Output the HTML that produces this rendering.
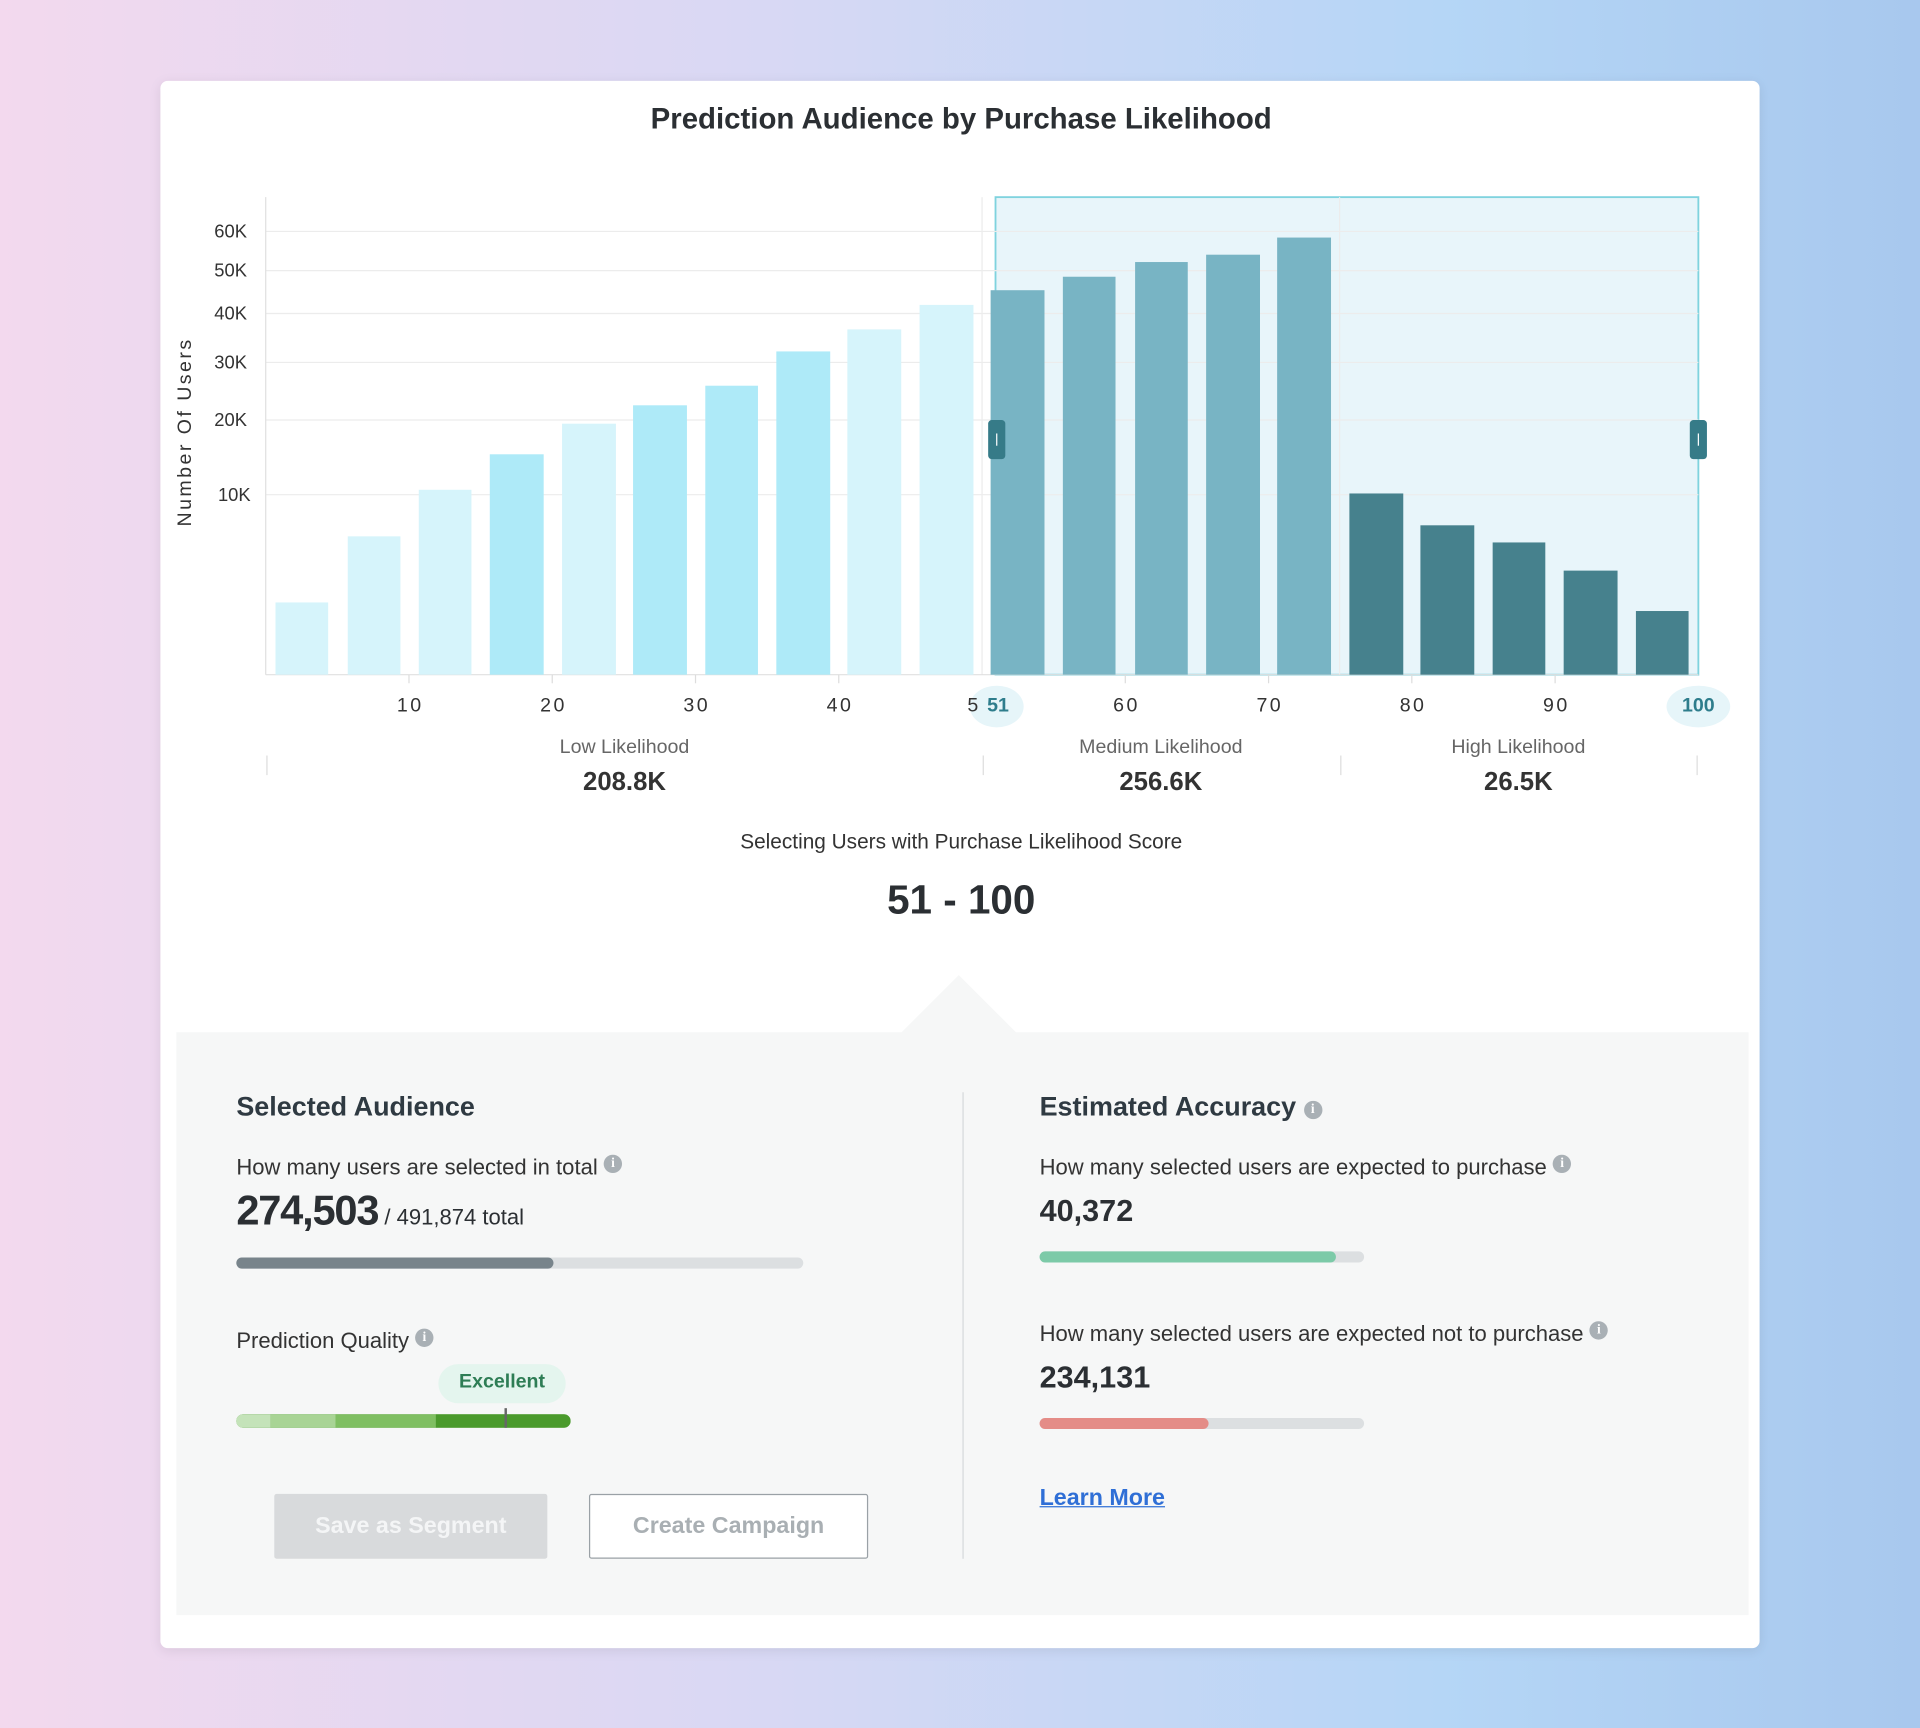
<!DOCTYPE html>
<html><head><meta charset="utf-8"><style>
html,body{margin:0;padding:0;width:1920px;height:1728px;overflow:hidden;background:linear-gradient(90deg,#f3d9ee 0%,#d8d8f4 40%,#b5d6f6 75%,#a8c8ee 100%);font-family:"Liberation Sans",sans-serif;}
#w{position:absolute;left:0;top:0;width:1568px;height:1411px;transform:scale(1.22449);transform-origin:0 0;}
.a{position:absolute;}
.card{left:131px;top:66px;width:1306px;height:1280px;background:#fff;border-radius:6px;box-shadow:0 2px 10px rgba(0,0,0,.08);}
.t{color:#333;white-space:nowrap;}
.c{transform:translateX(-50%);text-align:center;}
.info{display:inline-block;width:15px;height:15px;border-radius:50%;background:#a9b0b5;color:#fff;font-size:11px;font-weight:bold;text-align:center;line-height:15px;vertical-align:top;font-family:"Liberation Serif",serif;}
</style></head><body><div id="w">
<div class="a card"></div>
<div class="a t c" style="left:785px;top:84px;font-size:24px;font-weight:bold;color:#2b2f33;">Prediction Audience by Purchase Likelihood</div>

<svg class="a" style="left:0;top:0" width="1568" height="700">
<rect x="813" y="161" width="574" height="390" fill="#e8f5fa" stroke="#7fd3de" stroke-width="1.5"/>
<g stroke="#ececec" stroke-width="1">
<line x1="217" y1="189" x2="1387" y2="189"/><line x1="217" y1="221" x2="1387" y2="221"/><line x1="217" y1="256" x2="1387" y2="256"/><line x1="217" y1="296" x2="1387" y2="296"/><line x1="217" y1="343" x2="1387" y2="343"/><line x1="217" y1="404" x2="1387" y2="404"/>
<line x1="802" y1="161" x2="802" y2="551"/><line x1="1094" y1="161" x2="1094" y2="551"/>
</g>
<line x1="217" y1="161" x2="217" y2="551" stroke="#e0e0e0"/>
<line x1="217" y1="551" x2="1387" y2="551" stroke="#e0e0e0"/>
<g>
<rect x="225" y="492" width="43" height="59" fill="#d6f4fb"/>
<rect x="284" y="438" width="43" height="113" fill="#d6f4fb"/>
<rect x="342" y="400" width="43" height="151" fill="#d6f4fb"/>
<rect x="400" y="371" width="44" height="180" fill="#aeeaf8"/>
<rect x="459" y="346" width="44" height="205" fill="#d6f4fb"/>
<rect x="517" y="331" width="44" height="220" fill="#aeeaf8"/>
<rect x="576" y="315" width="43" height="236" fill="#aeeaf8"/>
<rect x="634" y="287" width="44" height="264" fill="#aeeaf8"/>
<rect x="692" y="269" width="44" height="282" fill="#d6f4fb"/>
<rect x="751" y="249" width="44" height="302" fill="#d6f4fb"/>
<rect x="809" y="237" width="44" height="314" fill="#78b4c4"/>
<rect x="868" y="226" width="43" height="325" fill="#78b4c4"/>
<rect x="927" y="214" width="43" height="337" fill="#78b4c4"/>
<rect x="985" y="208" width="44" height="343" fill="#78b4c4"/>
<rect x="1043" y="194" width="44" height="357" fill="#78b4c4"/>
<rect x="1102" y="403" width="44" height="148" fill="#46818d"/>
<rect x="1160" y="429" width="44" height="122" fill="#46818d"/>
<rect x="1219" y="443" width="43" height="108" fill="#46818d"/>
<rect x="1277" y="466" width="44" height="85" fill="#46818d"/>
<rect x="1336" y="499" width="43" height="52" fill="#46818d"/>
</g>
<g stroke="#ddd"><line x1="334" y1="551" x2="334" y2="558"/><line x1="451" y1="551" x2="451" y2="558"/><line x1="568" y1="551" x2="568" y2="558"/><line x1="685" y1="551" x2="685" y2="558"/><line x1="919" y1="551" x2="919" y2="558"/><line x1="1036" y1="551" x2="1036" y2="558"/><line x1="1153" y1="551" x2="1153" y2="558"/><line x1="1270" y1="551" x2="1270" y2="558"/>
<line x1="218" y1="617" x2="218" y2="633"/><line x1="803" y1="617" x2="803" y2="633"/><line x1="1095" y1="617" x2="1095" y2="633"/><line x1="1386" y1="617" x2="1386" y2="633"/></g>
<rect x="807" y="343" width="14" height="32" rx="3" fill="#367b88"/><line x1="814" y1="354" x2="814" y2="364" stroke="#fff"/>
<rect x="1380" y="343" width="14" height="32" rx="3" fill="#367b88"/><line x1="1387" y1="354" x2="1387" y2="364" stroke="#fff"/>
<ellipse cx="814" cy="577" rx="22" ry="17" fill="#e6f5f9"/>
<ellipse cx="1387" cy="577" rx="26" ry="17" fill="#e6f5f9"/>
</svg>
<div class="a t" style="left:0;top:0;font-size:15px;color:#333;">
<div class="a" style="left:175px;top:181px">60K</div><div class="a" style="left:175px;top:213px">50K</div><div class="a" style="left:175px;top:248px">40K</div><div class="a" style="left:175px;top:288px">30K</div><div class="a" style="left:175px;top:335px">20K</div><div class="a" style="left:178px;top:396px">10K</div>
</div>
<div class="a t" style="left:77px;top:346px;transform:rotate(-90deg);width:150px;text-align:center;font-size:16px;letter-spacing:2px;color:#333;">Number Of Users</div>
<div class="a t" style="top:568px;left:0;font-size:16px;letter-spacing:2px;color:#333">
<div class="a c" style="left:335px">10</div><div class="a c" style="left:452px">20</div><div class="a c" style="left:569px">30</div><div class="a c" style="left:686px">40</div><div class="a c" style="left:920px">60</div><div class="a c" style="left:1037px">70</div><div class="a c" style="left:1154px">80</div><div class="a c" style="left:1271px">90</div>
<div class="a" style="left:790px">5</div>
<div class="a c" style="left:815px;font-weight:bold;color:#2e7d8c;letter-spacing:0">51</div><div class="a c" style="left:1387px;font-weight:bold;color:#2e7d8c;letter-spacing:0">100</div>
</div>
<div class="a t c" style="left:510px;top:602px;font-size:16px;color:#666">Low Likelihood</div>
<div class="a t c" style="left:948px;top:602px;font-size:16px;color:#666">Medium Likelihood</div>
<div class="a t c" style="left:1240px;top:602px;font-size:16px;color:#666">High Likelihood</div>
<div class="a t c" style="left:510px;top:627px;font-size:21px;font-weight:bold;color:#333">208.8K</div>
<div class="a t c" style="left:948px;top:627px;font-size:21px;font-weight:bold;color:#333">256.6K</div>
<div class="a t c" style="left:1240px;top:627px;font-size:21px;font-weight:bold;color:#333">26.5K</div>
<div class="a t c" style="left:785px;top:678px;font-size:17px;color:#333">Selecting Users with Purchase Likelihood Score</div>
<div class="a t c" style="left:785px;top:716px;font-size:33px;font-weight:bold;color:#2b2f33">51 - 100</div>

<div class="a" style="left:144px;top:843px;width:1284px;height:476px;background:#f6f7f7"></div>
<div class="a" style="left:750px;top:810px;width:66px;height:66px;background:#f6f7f7;transform:rotate(45deg)"></div>
<div class="a" style="left:786px;top:892px;width:1px;height:381px;background:#d6d9db"></div>

<div class="a t" style="left:193px;top:891px;font-size:22px;font-weight:bold;color:#2f3a42">Selected Audience</div>
<div class="a t" style="left:193px;top:943px;font-size:18px;color:#333">How many users are selected in total <span class="info">i</span></div>
<div class="a t" style="left:193px;top:970px;font-size:34px;font-weight:bold;color:#2b2f33;letter-spacing:-1px">274,503<span style="font-size:18px;font-weight:normal;letter-spacing:0"> / 491,874 total</span></div>
<div class="a" style="left:193px;top:1027px;width:463px;height:9px;border-radius:5px;background:#dcdfe1"></div>
<div class="a" style="left:193px;top:1027px;width:259px;height:9px;border-radius:5px;background:#78848b"></div>
<div class="a t" style="left:193px;top:1085px;font-size:18px;color:#333">Prediction Quality <span class="info">i</span></div>
<div class="a t" style="left:358px;top:1114px;width:104px;height:32px;border-radius:16px;background:#e4f5ee;color:#2e7d55;font-size:16px;font-weight:bold;text-align:center;line-height:30px">Excellent</div>
<div class="a" style="left:193px;top:1155px;width:273px;height:11px;border-radius:6px;overflow:hidden;background:#4a9a2c">
<div class="a" style="left:0;top:0;width:28px;height:11px;background:#c4e3b9"></div>
<div class="a" style="left:28px;top:0;width:53px;height:11px;background:#a8d495"></div>
<div class="a" style="left:81px;top:0;width:82px;height:11px;background:#7fbf62"></div>
<div class="a" style="left:163px;top:0;width:110px;height:11px;background:#4a9a2c"></div>
</div>
<div class="a" style="left:412px;top:1150px;width:2px;height:16px;background:#666"></div>
<div class="a t" style="left:224px;top:1220px;width:223px;height:53px;background:#d8dadc;border-radius:2px;color:#f4f5f6;font-size:19px;font-weight:bold;text-align:center;line-height:53px">Save as Segment</div>
<div class="a t" style="left:481px;top:1220px;width:226px;height:51px;background:#fff;border:1px solid #9aa1a6;border-radius:2px;color:#a9afb3;font-size:19px;font-weight:bold;text-align:center;line-height:51px">Create Campaign</div>

<div class="a t" style="left:849px;top:891px;font-size:22px;font-weight:bold;color:#2f3a42">Estimated Accuracy <span class="info" style="vertical-align:2px">i</span></div>
<div class="a t" style="left:849px;top:943px;font-size:18px;color:#333">How many selected users are expected to purchase <span class="info">i</span></div>
<div class="a t" style="left:849px;top:975px;font-size:25px;font-weight:bold;color:#2b2f33">40,372</div>
<div class="a" style="left:849px;top:1022px;width:265px;height:9px;border-radius:5px;background:#dcdfe1"></div>
<div class="a" style="left:849px;top:1022px;width:242px;height:9px;border-radius:5px;background:#7ccaa8"></div>
<div class="a t" style="left:849px;top:1079px;font-size:18px;color:#333">How many selected users are expected not to purchase <span class="info">i</span></div>
<div class="a t" style="left:849px;top:1111px;font-size:25px;font-weight:bold;color:#2b2f33">234,131</div>
<div class="a" style="left:849px;top:1158px;width:265px;height:9px;border-radius:5px;background:#dcdfe1"></div>
<div class="a" style="left:849px;top:1158px;width:138px;height:9px;border-radius:5px;background:#e48c87"></div>
<div class="a t" style="left:849px;top:1213px;font-size:19px;font-weight:bold;color:#2f6fd6;text-decoration:underline">Learn More</div>
</div></body></html>
